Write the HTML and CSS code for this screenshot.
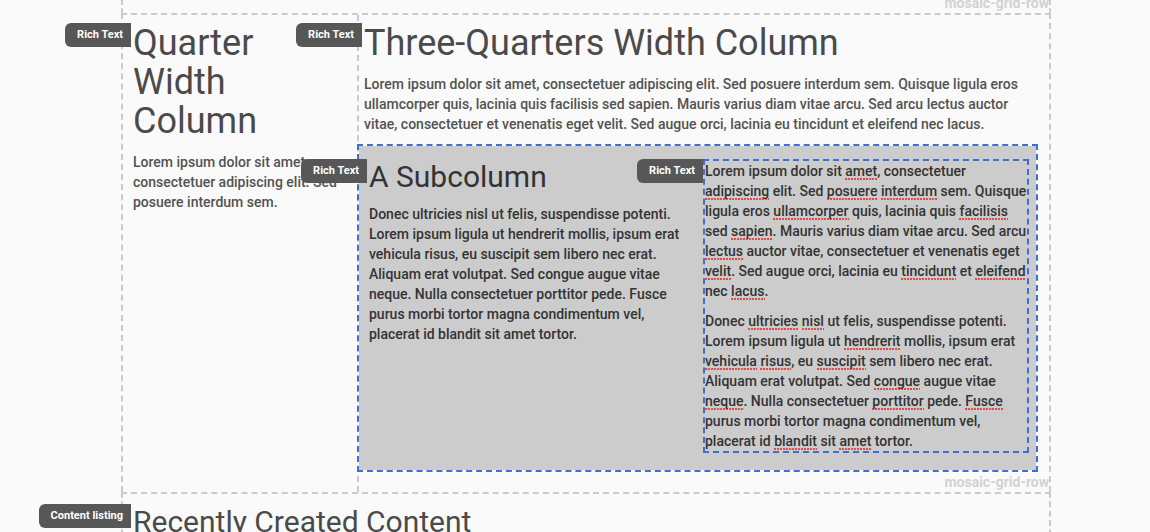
FILE: index.html
```html
<!DOCTYPE html>
<html lang="en">
<head>
<meta charset="utf-8">
<title>Mosaic layout</title>
<link rel="stylesheet" href="styles.css">
</head>
<body>
<div class="grid">
  <div class="row row-stub"></div>
  <div class="row">
    <span class="row-label">mosaic-grid-row</span>
    <div class="col col-quarter">
      <div class="tile rich">
        <span class="badge">Rich Text</span>
        <h1>Quarter Width Column</h1>
        <p>Lorem ipsum dolor sit amet, consectetuer adipiscing elit. Sed posuere interdum sem.</p>
      </div>
    </div>
    <div class="col col-three">
      <div class="tile rich rich-main">
        <span class="badge">Rich Text</span>
        <h1>Three-Quarters Width Column</h1>
        <p>Lorem ipsum dolor sit amet, consectetuer adipiscing elit. Sed posuere interdum sem. Quisque ligula eros ullamcorper quis, lacinia quis facilisis sed sapien. Mauris varius diam vitae arcu. Sed arcu lectus auctor vitae, consectetuer et venenatis eget velit. Sed augue orci, lacinia eu tincidunt et eleifend nec lacus.</p>
      </div>
      <div class="subrow">
        <div class="subcol">
          <div class="tile rich">
            <span class="badge">Rich Text</span>
            <h2>A Subcolumn</h2>
            <p>Donec ultricies nisl ut felis, suspendisse potenti. Lorem ipsum ligula ut hendrerit mollis, ipsum erat vehicula risus, eu suscipit sem libero nec erat. Aliquam erat volutpat. Sed congue augue vitae neque. Nulla consectetuer porttitor pede. Fusce purus morbi tortor magna condimentum vel, placerat id blandit sit amet tortor.</p>
          </div>
        </div>
        <div class="subcol">
          <div class="tile rich selected">
            <span class="badge">Rich Text</span>
            <p>Lorem ipsum dolor sit <span class="sp">amet</span>, consectetuer <span class="sp">adipiscing</span> elit. Sed <span class="sp">posuere</span> <span class="sp">interdum</span> sem. Quisque ligula eros <span class="sp">ullamcorper</span> quis, lacinia quis <span class="sp">facilisis</span> sed <span class="sp">sapien</span>. Mauris varius diam vitae arcu. Sed arcu <span class="sp">lectus</span> auctor vitae, consectetuer et venenatis eget <span class="sp">velit</span>. Sed augue orci, lacinia eu <span class="sp">tincidunt</span> et <span class="sp">eleifend</span> nec <span class="sp">lacus</span>.</p>
            <p>Donec <span class="sp">ultricies</span> <span class="sp">nisl</span> ut felis, suspendisse potenti. Lorem ipsum ligula ut <span class="sp">hendrerit</span> mollis, ipsum erat <span class="sp">vehicula</span> <span class="sp">risus</span>, eu <span class="sp">suscipit</span> sem libero nec erat. Aliquam erat volutpat. Sed <span class="sp">congue</span> augue vitae <span class="sp">neque</span>. Nulla consectetuer <span class="sp">porttitor</span> pede. <span class="sp">Fusce</span> purus morbi tortor magna condimentum vel, placerat id <span class="sp">blandit</span> sit <span class="sp">amet</span> tortor.</p>
          </div>
        </div>
      </div>
    </div>
  </div>
  <div class="row row-full">
    <span class="row-label">mosaic-grid-row</span>
    <div class="col col-full">
      <div class="tile listing">
        <span class="badge">Content listing</span>
        <h2 class="listing-title">Recently Created Content</h2>
      </div>
    </div>
  </div>
</div>
</body>
</html>
```

FILE: styles.css
```css
html, body {
  margin: 0;
  padding: 0;
  background: #fafafa;
  height: 100%;
  overflow: hidden;
}

body {
  font-family: Roboto, "Noto Sans", sans-serif;
  color: #4d4d4d;
}

.grid {
  margin-left: 121px;
  width: 930px;
}

.row {
  position: relative;
  display: grid;
  grid-template-columns: 236px 1fr;
  border: 2px dashed #cbcbcb;
  border-bottom: none;
}

.row-stub {
  height: 13px;
  border-top: none;
}

.row-full {
  grid-template-columns: 1fr;
  min-height: 60px;
}

.row-label {
  position: absolute;
  right: 0;
  bottom: calc(100% + 4px);
  font-size: 14px;
  line-height: 16px;
  font-weight: 700;
  color: #d2d2d2;
}

.col-quarter {
  padding: 9px 4px 0 10px;
  border-right: 2px dashed #cbcbcb;
}

.col-three {
  padding: 9px 13px 22px 0;
}

.col-full {
  padding: 11px 0 0 10px;
}

.tile {
  position: relative;
}

.badge {
  position: absolute;
  top: -1px;
  right: calc(100% + 2px);
  z-index: 3;
  height: 24px;
  line-height: 24px;
  padding: 0 8px 0 12px;
  border-radius: 6px 0 0 6px;
  background: #575757;
  color: #fff;
  font-size: 11px;
  font-weight: 700;
  white-space: nowrap;
}

.subrow .badge {
  top: -2px;
}

h1 {
  margin: 0 0 11px;
  font-size: 36px;
  line-height: 39px;
  font-weight: 400;
  color: #4a4a4a;
}

h2 {
  margin: 0 0 10px;
  font-size: 30px;
  line-height: 32.5px;
  font-weight: 400;
  color: #333;
}

h2.listing-title {
  padding-top: 1px;
  color: #4a4a4a;
}

.rich p {
  margin: 0 0 10px;
  font-size: 14px;
  line-height: 20px;
  font-weight: 500;
  color: #525252;
}

.rich-main {
  margin-left: 5px;
  margin-bottom: 12px;
}

.subrow {
  display: grid;
  grid-template-columns: 1fr 1fr;
  column-gap: 14px;
  padding: 15px 9px 9px 10px;
  background: #cccccc;
  outline: 2px dashed #3d6fd6;
}

.subrow .rich p,
.subrow h2 {
  color: #333;
}

.selected {
  outline: 2px dashed #3d6fd6;
}

.sp {
  padding-bottom: 1px;
  background: linear-gradient(90deg, #ec4a43 0 2px, transparent 2px) repeat-x left bottom / 3px 2px;
}
```
